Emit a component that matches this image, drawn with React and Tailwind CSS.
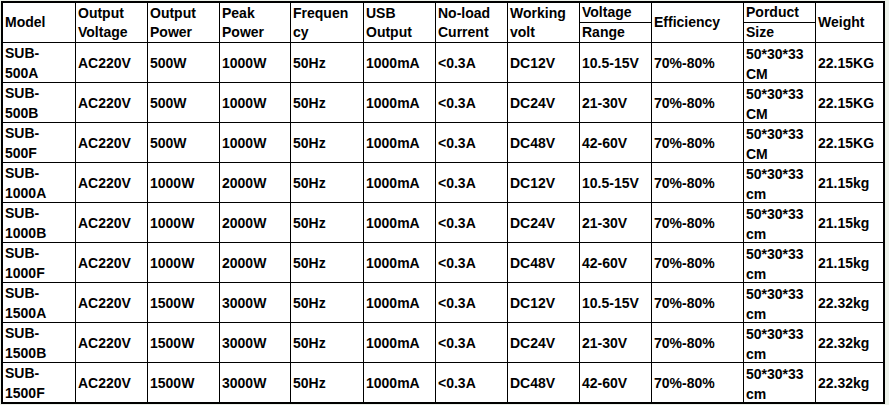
import React from 'react';

const header = [
    { lines: ['Model'] },
    { lines: ['Output', 'Voltage'] },
    { lines: ['Output', 'Power'] },
    { lines: ['Peak', 'Power'] },
    { lines: ['Frequen', 'cy'] },
    { lines: ['USB', 'Output'] },
    { lines: ['No-load', 'Current'] },
    { lines: ['Working', 'volt'] },
    { split: ['Voltage', 'Range'] },
    { lines: ['Efficiency'] },
    { split: ['Porduct', 'Size'] },
    { lines: ['Weight'] },
];

const groups = [
    { power: '500W', peak: '1000W', size: 'CM', weight: '22.15KG', models: ['500A', '500B', '500F'] },
    { power: '1000W', peak: '2000W', size: 'cm', weight: '21.15kg', models: ['1000A', '1000B', '1000F'] },
    { power: '1500W', peak: '3000W', size: 'cm', weight: '22.32kg', models: ['1500A', '1500B', '1500F'] },
];

const volts = [
    ['DC12V', '10.5-15V'],
    ['DC24V', '21-30V'],
    ['DC48V', '42-60V'],
];

const rows = groups.flatMap((g) =>
    g.models.map((m, i) => [
        ['SUB-', m],
        ['AC220V'],
        [g.power],
        [g.peak],
        ['50Hz'],
        ['1000mA'],
        ['<0.3A'],
        [volts[i][0]],
        [volts[i][1]],
        ['70%-80%'],
        ['50*30*33', g.size],
        [g.weight],
    ])
);

const Cell = ({ lines, className = '' }) => (
    <div className={`bg-white flex items-center pl-[2px] overflow-hidden ${className}`}>
        <div>
            {lines.map((l, i) => (
                <div key={i} className="whitespace-nowrap">{l}</div>
            ))}
        </div>
    </div>
);

const App = () => {
    return (
        <div
            className="w-[889px] h-[405px] bg-[#edf2ea] pt-px pl-px text-black font-bold text-[14px]"
            style={{ fontFamily: '"Liberation Sans", Arial, sans-serif' }}
        >
            <div className="grid w-fit border-2 border-black bg-black gap-px grid-cols-[72px_71px_71px_70px_72px_71px_71px_71px_71px_91px_71px_67px] grid-rows-[19px_19px_repeat(9,39px)]">
                {header.map((h, i) =>
                    h.split ? (
                        <React.Fragment key={i}>
                            <Cell lines={[h.split[0]]} className="leading-[19px] row-start-1" />
                            <Cell lines={[h.split[1]]} className="leading-[19px] row-start-2" />
                        </React.Fragment>
                    ) : (
                        <Cell key={i} lines={h.lines} className="leading-[19px] row-start-1 row-span-2" />
                    )
                )}
                {rows.map((r, ri) =>
                    r.map((c, ci) => (
                        <Cell
                            key={`${ri}-${ci}`}
                            lines={c}
                            className={`leading-[20px] ${ci === 10 ? 'items-start pt-px' : ''}`}
                        />
                    ))
                )}
            </div>
        </div>
    );
};

export default App;
